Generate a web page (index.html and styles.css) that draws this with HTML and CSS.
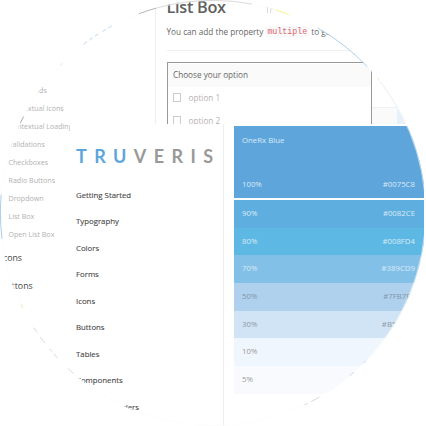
FILE: index.html
```html
<!DOCTYPE html>
<html lang="en">
<head>
<meta charset="utf-8">
<title>Truveris style guide</title>
<link rel="stylesheet" href="styles.css">
</head>
<body>
<div class="lens">
  <div class="guide">
    <nav class="side">
      <span>Input Fields</span><span>Contextual Icons</span><span>Contextual Loading</span><span>Validations</span><span>Checkboxes</span><span>Radio Buttons</span><span>Dropdown</span><span>List Box</span><span>Open List Box</span>
      <b>Icons</b><b>Buttons</b>
    </nav>
    <main class="doc">
      <h1>List Box</h1>
      <p class="intro"><span>You can add the property</span><code>multiple</code><span>to get</span></p>
      <div class="demo">
        <div class="listbox">
          <div class="choose">Choose your option</div>
          <label><i></i>option 1</label>
          <label><i></i>option 2</label>
        </div>
        <div class="more"><i></i></div>
      </div>
    </main>
  </div>
  <div class="front">
    <nav class="menu">
      <div class="logo"><span>TRU</span>VERIS</div>
      <a>Getting Started</a><a>Typography</a><a>Colors</a><a>Forms</a><a>Icons</a><a>Buttons</a><a>Tables</a><a>Components</a><a>Progress Loaders</a>
    </nav>
    <section class="swatches">
      <div class="main-swatch"><span>OneRx Blue</span><div><span>100%</span><span>#0075C8</span></div></div>
      <div class="row s90"><span>90%</span><span>#0082CE</span></div>
      <div class="row s80"><span>80%</span><span>#008FD4</span></div>
      <div class="row s70"><span>70%</span><span>#389CD9</span></div>
      <div class="row s50"><span>50%</span><span>#7FB7E5</span></div>
      <div class="row s30"><span>30%</span><span>#B5D3F0</span></div>
      <div class="row s10"><span>10%</span></div>
      <div class="row s5"><span>5%</span></div>
    </section>
  </div>
</div>
<svg class="rim" viewBox="0 0 426 426" fill="none" stroke-width="1">
  <circle cx="213" cy="213" r="212.6" stroke="#fafafa" stroke-width=".6"/>
  <g stroke-width=".7">
    <circle cx="213" cy="213" r="212.6" pathLength="360" stroke="#8fbbe2" stroke-dasharray="17 343" stroke-dashoffset="-299.5"/>
    <circle cx="213" cy="213" r="212.6" pathLength="360" stroke="#e7ebad" stroke-dasharray="1 359" stroke-dashoffset="-320.5"/>
    <circle cx="213" cy="213" r="212.6" pathLength="360" stroke="#dce9f5" stroke-dasharray="8 352" stroke-dashoffset="-322"/>
    <circle cx="213" cy="213" r="212.6" pathLength="360" stroke="#8db8e0" stroke-dasharray="12 348" stroke-dashoffset="-173"/>
    <circle cx="213" cy="213" r="212.6" pathLength="360" stroke="#888" stroke-dasharray="2 358" stroke-dashoffset="-205"/>
    <circle cx="213" cy="213" r="212.6" pathLength="360" stroke="#9fc4ea" stroke-dasharray="1.2 .8 1 .8 1 1.4 1 .8 1 351" stroke-dashoffset="-232.5"/>
    <circle cx="213" cy="213" r="212.6" pathLength="360" stroke="#e0e39a" stroke-dasharray="1 359" stroke-dashoffset="-224"/>
    <circle cx="213" cy="213" r="212.6" pathLength="360" stroke="#999" stroke-dasharray="5 355" stroke-dashoffset="-249.5"/>
    <circle cx="213" cy="213" r="212.6" pathLength="360" stroke="#ccc" stroke-dasharray="26 334" stroke-dashoffset="-254.5"/>
    <circle cx="213" cy="213" r="212.6" pathLength="360" stroke="#f2f06a" stroke-dasharray="4 356" stroke-dashoffset="-287"/>
    <circle cx="213" cy="213" r="212.6" pathLength="360" stroke="#ccc" stroke-dasharray="1.5 .8 1 2 2 1.5 1.5 349.7" stroke-dashoffset="-137"/>
    <circle cx="213" cy="213" r="212.6" pathLength="360" stroke="#ccc" stroke-dasharray="2 358" stroke-dashoffset="-131"/>
    <circle cx="213" cy="213" r="212.6" pathLength="360" stroke="#e5e38c" stroke-dasharray="1 359" stroke-dashoffset="-153.5"/>
    <circle cx="213" cy="213" r="212.6" pathLength="360" stroke="#a9cdea" stroke-dasharray="1 3.5 1.5 354" stroke-dashoffset="-44"/>
    <circle cx="213" cy="213" r="212.6" pathLength="360" stroke="#ccc" stroke-dasharray="2.5 1 1 355.5" stroke-dashoffset="-60"/>
  </g>
  <path d="M267.5 7v6M270.5 13V9h2" stroke="#ddd"/>
</svg>
</body>
</html>
```
FILE: styles.css
```css
* { box-sizing: border-box; }
body { margin: 0; background: #fff; font-family: "Open Sans", "Noto Sans", sans-serif; font-size: 7.8px; overflow: hidden; }
.lens { position: relative; width: 426px; height: 426px; overflow: hidden; clip-path: circle(213px at 213px 213px); }
.guide { display: flex; height: 426px; }
.side { width: 155px; padding: 81px 0 0 8.5px; display: flex; flex-direction: column; color: #b2b2b2; font-size: 7.1px; white-space: nowrap; }
.side span { height: 18px; line-height: 18px; }
.side b { font-weight: 400; font-size: 8.8px; color: #444; height: 28px; line-height: 28px; margin-left: -8px; }
.side span:last-of-type { margin-bottom: 1px; }
.doc { flex: 1; height: 124px; overflow: hidden; border-left: 1px solid #eee; padding-left: 10.5px; color: #666; }
h1 { margin: 0; height: 16px; line-height: 15px; font-size: 16.3px; font-weight: 600; letter-spacing: -.3px; color: #606060; }
.intro { display: flex; align-items: center; margin: 0; height: 35px; padding-bottom: 3px; border-bottom: 1px solid #eee; width: 220px; font-size: 8.2px; white-space: nowrap; }
code { font: 8.3px "Liberation Mono", monospace; color: #dc6570; background: #f9f9f9; padding: 1px 2px; margin: 0 2px; border-radius: 2px; }
.demo { display: flex; margin-top: 11px; }
.listbox { width: 205px; height: 80px; border: 1px solid #999; padding-top: 1px; font-size: 8.2px; }
.choose { height: 23px; line-height: 22px; padding-left: 5.5px; background: #fafafa; }
.listbox label { display: flex; align-items: center; gap: 7.5px; height: 23px; line-height: 20px; padding: 0 0 2px 5px; color: #b8b2b2; }
.listbox i { width: 8.5px; height: 8.5px; border: 1px solid #ccc; }
.more { width: 50px; height: 40px; margin-top: 45px; border-top: 1px solid #f0f0f0; background: #fafafa; display: flex; justify-content: flex-end; }
.more i { width: 25px; background: #e8f0fa; }
.front { position: absolute; left: 70px; top: 124px; width: 356px; height: 302px; background: #fff; display: flex; }
.menu { width: 154px; border-right: 1.5px solid #eee; padding: 19px 0 0 6px; display: flex; flex-direction: column; color: #484848; }
.menu a { height: 26.5px; flex: none; line-height: 26px; -webkit-text-stroke: .12px #484848; }
.logo { height: 38.5px; flex: none; font: 700 18px/26px Lato, sans-serif; letter-spacing: 7.4px; color: #999; white-space: nowrap; }
.logo span { color: #5da5da; }
.swatches { width: 189.5px; margin: 2px 0 0 10px; color: #d9eaf7; }
.main-swatch { height: 72px; background: #5ea5dc; margin-bottom: 2px; padding: 8px 8.5px 8px 8px; display: flex; flex-direction: column; justify-content: space-between; line-height: 12px; }
.main-swatch div, .row { display: flex; justify-content: space-between; }
.row { height: 27.7px; line-height: 27.7px; padding: 0 8.5px 0 8px; }
.s90 { background: #5eafe0; }
.s80 { background: #5db8e3; }
.s70 { background: #83c0e8; }
.s50 { background: #afd1ee; color: #8296a8; }
.s30 { background: #d1e4f5; color: #8c98a6; }
.s10 { background: #f0f6fd; color: #999; }
.s5 { background: #f8fafe; color: #999; }
.rim { position: absolute; left: 0; top: 0; width: 426px; height: 426px; }
```
